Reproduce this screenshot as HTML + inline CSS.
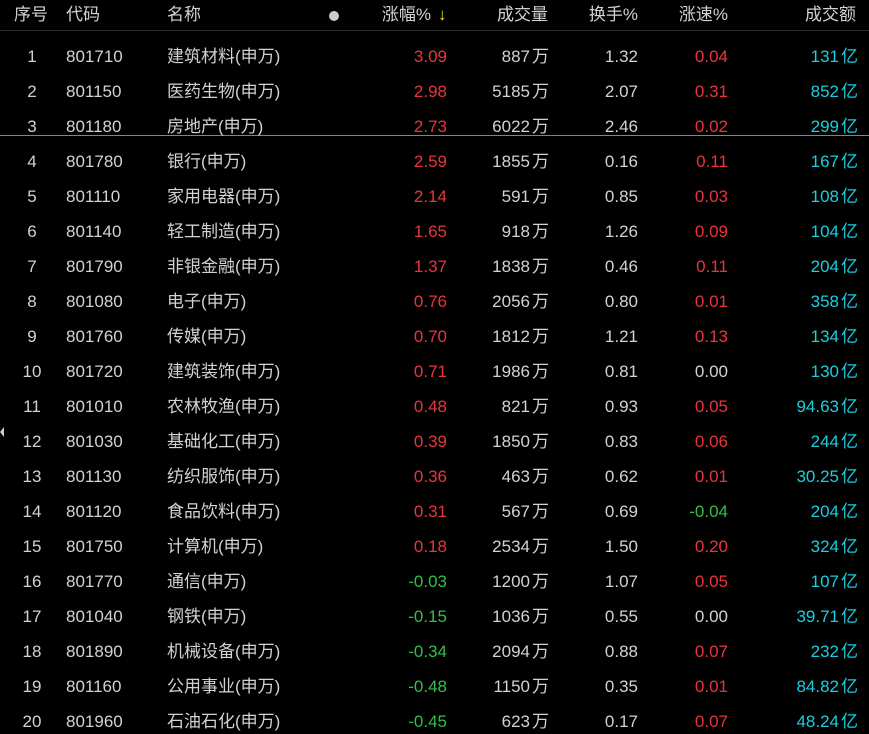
<!DOCTYPE html>
<html><head><meta charset="utf-8"><style>
body{margin:0;background:#000;width:869px;height:734px;overflow:hidden;position:relative;font-family:"Liberation Sans","Noto Sans CJK SC",sans-serif;font-size:17px;color:#d2d2d2}
.r{position:absolute;left:0;width:869px;height:24px;line-height:24px}
.r span{position:absolute;white-space:nowrap}
.n{width:40px;left:12px;text-align:center}
.c{left:66px}.m{left:167px}
.z{right:422px;text-align:right}
.v{right:320px;text-align:right}
.h{right:231px;text-align:right}
.s{right:141px;text-align:right}
.a{right:11px;text-align:right;color:#19cfe0}
.R{color:#e8353d}.G{color:#30c048}
i{font-style:normal;margin-left:2px}
</style></head><body>
<div class="r" style="top:3px">
<span style="left:14px">序号</span><span class="c">代码</span><span class="m">名称</span>
<span style="left:329px;top:8px;width:10px;height:10px;border-radius:50%;background:#ccc"></span>
<span style="right:438px">涨幅%</span><span style="left:438px;color:#f0e000">↓</span>
<span class="v" style="right:321px">成交量</span><span class="h">换手%</span><span class="s">涨速%</span><span class="a" style="color:#d2d2d2;right:13px">成交额</span>
</div>
<div style="position:absolute;top:30px;left:0;width:869px;height:1px;background:#2a2a2a"></div>
<div style="position:absolute;top:135px;left:0;width:869px;height:1px;background:#ff5a1e"></div>
<div style="position:absolute;left:0;top:427px;width:0;height:0;border-top:5px solid transparent;border-bottom:5px solid transparent;border-right:4px solid #ccc"></div>
<div id="rows"></div>
<script>
var d=[["801710","建筑材料","3.09","887","1.32","0.04","131"],["801150","医药生物","2.98","5185","2.07","0.31","852"],["801180","房地产","2.73","6022","2.46","0.02","299"],["801780","银行","2.59","1855","0.16","0.11","167"],["801110","家用电器","2.14","591","0.85","0.03","108"],["801140","轻工制造","1.65","918","1.26","0.09","104"],["801790","非银金融","1.37","1838","0.46","0.11","204"],["801080","电子","0.76","2056","0.80","0.01","358"],["801760","传媒","0.70","1812","1.21","0.13","134"],["801720","建筑装饰","0.71","1986","0.81","0.00","130"],["801010","农林牧渔","0.48","821","0.93","0.05","94.63"],["801030","基础化工","0.39","1850","0.83","0.06","244"],["801130","纺织服饰","0.36","463","0.62","0.01","30.25"],["801120","食品饮料","0.31","567","0.69","-0.04","204"],["801750","计算机","0.18","2534","1.50","0.20","324"],["801770","通信","-0.03","1200","1.07","0.05","107"],["801040","钢铁","-0.15","1036","0.55","0.00","39.71"],["801890","机械设备","-0.34","2094","0.88","0.07","232"],["801160","公用事业","-0.48","1150","0.35","0.01","84.82"],["801960","石油石化","-0.45","623","0.17","0.07","48.24"]];
var h="";function col(x){return x.charAt(0)=="-"?"G":(parseFloat(x)==0?"":"R")}
d.forEach(function(r,i){h+='<div class="r" style="top:'+(45+35*i)+'px"><span class="n">'+(i+1)+'</span><span class="c">'+r[0]+'</span><span class="m">'+r[1]+'(申万)</span><span class="z '+col(r[2])+'">'+r[2]+'</span><span class="v">'+r[3]+'<i>万</i></span><span class="h">'+r[4]+'</span><span class="s '+col(r[5])+'">'+r[5]+'</span><span class="a">'+r[6]+'<i>亿</i></span></div>'});
document.getElementById("rows").innerHTML=h;
</script>
</body></html>
